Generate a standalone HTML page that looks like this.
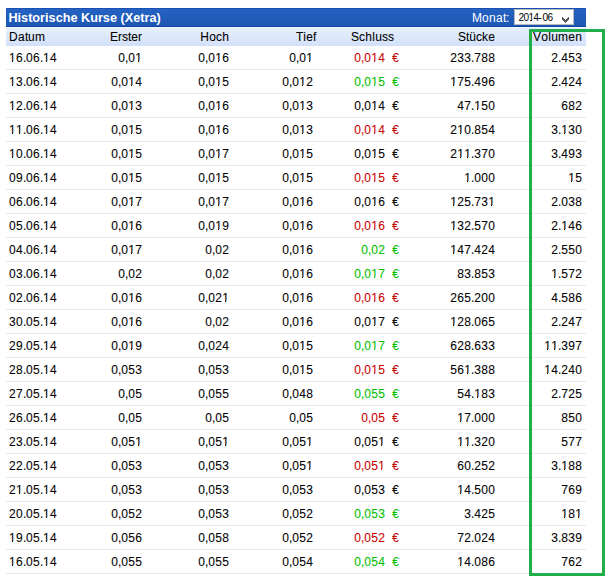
<!DOCTYPE html>
<html><head><meta charset="utf-8"><style>
html,body{margin:0;padding:0;background:#fff;width:607px;height:578px;overflow:hidden;position:relative}
body{font-family:"Liberation Sans",sans-serif;font-size:12px;color:#000}
.t{position:absolute;white-space:pre;line-height:14px;height:14px;-webkit-text-stroke:0.08px currentColor}
.r{text-align:right}
i{font-style:normal;display:inline-block}
.one{position:relative}.one::before,.one::after{content:'';position:absolute;top:10px;height:1px;background:#fff}.one::before{left:0;width:3px}.one::after{left:4px;width:3px}
.w3{width:3px}.w4{width:4px}.w6{width:6px}.w7{width:7px}.w8{width:8px}.w9{width:9px}.w10{width:10px}
.cr{color:#c80000}
.cg{color:#00c000}
#bar{position:absolute;left:6px;top:8px;width:580px;height:19px;background:linear-gradient(#2462c3,#1d57b3);border-top:1px solid #1a50b3;border-bottom:1px solid #1047a3;box-sizing:border-box}
#hl{position:absolute;left:6px;top:27px;width:580px;height:1px;background:#eef5fe}
#hdr{position:absolute;left:6px;top:28px;width:580px;height:18px;background:linear-gradient(#e7effc,#d2e0f9)}
.ln{position:absolute;left:6px;width:580px;height:1px;background:#e8e8e8}
#title{position:absolute;left:8.4px;top:11px;font-weight:bold;font-size:12.7px;color:#fff;line-height:15px;white-space:pre}
#monat{position:absolute;left:472px;top:11px;color:#fff;line-height:15px;white-space:pre}
#sel{position:absolute;left:514px;top:9px;width:60px;height:16px;box-sizing:border-box;border:1px solid #b9b9b9;background:#fff}
#seltxt{position:absolute;left:518.6px;top:12px;font-size:10px;line-height:11px;white-space:pre}
#seltxt i{width:5px}#seltxt i.h{width:3.8px}
.o1{position:relative}.o1::before,.o1::after{content:'';position:absolute;top:8px;height:1px;background:#fff}.o1::before{left:0;width:1px}.o1::after{left:3px;width:2px}
#green{position:absolute;left:529px;top:29px;width:76px;height:547px;box-sizing:border-box;border:3px solid #1fae4a}
</style></head><body>
<div id="bar"></div><div id="hl"></div><div id="hdr"></div>
<div id="title">Historische Kurse (Xetra)</div>
<div id="monat"><i class="w10">M</i><i class="w7">o</i><i class="w7">n</i><i class="w7">a</i><i class="w3">t</i><i class="w3">:</i></div>
<div id="sel"></div>
<div id="seltxt"><i>2</i><i>0</i><i class="o1">1</i><i>4</i><i class="h">-</i><i>0</i><i>6</i></div>
<svg style="position:absolute;left:0;top:0" width="607" height="40" shape-rendering="crispEdges"><g fill="#575757"><rect x="562" y="17" width="1" height="3"/><rect x="563" y="18" width="1" height="3"/><rect x="564" y="19" width="1" height="3"/><rect x="565" y="20" width="1" height="3"/><rect x="566" y="19" width="1" height="3"/><rect x="567" y="18" width="1" height="3"/><rect x="568" y="17" width="1" height="3"/></g></svg>

<div class="ln" style="top:69px"></div>
<div class="ln" style="top:93px"></div>
<div class="ln" style="top:117px"></div>
<div class="ln" style="top:141px"></div>
<div class="ln" style="top:165px"></div>
<div class="ln" style="top:189px"></div>
<div class="ln" style="top:213px"></div>
<div class="ln" style="top:237px"></div>
<div class="ln" style="top:261px"></div>
<div class="ln" style="top:285px"></div>
<div class="ln" style="top:309px"></div>
<div class="ln" style="top:333px"></div>
<div class="ln" style="top:357px"></div>
<div class="ln" style="top:381px"></div>
<div class="ln" style="top:405px"></div>
<div class="ln" style="top:429px"></div>
<div class="ln" style="top:453px"></div>
<div class="ln" style="top:477px"></div>
<div class="ln" style="top:501px"></div>
<div class="ln" style="top:525px"></div>
<div class="ln" style="top:549px"></div>
<div class="ln" style="top:573px"></div>
<div class="t " style="left:9px;top:30px"><i class="w9">D</i><i class="w7">a</i><i class="w3">t</i><i class="w7">u</i><i class="w10">m</i></div>
<div class="t r " style="right:465px;top:30px"><i class="w8">E</i><i class="w4">r</i><i class="w6">s</i><i class="w3">t</i><i class="w7">e</i><i class="w4">r</i></div>
<div class="t r " style="right:378px;top:30px"><i class="w9">H</i><i class="w7">o</i><i class="w6">c</i><i class="w7">h</i></div>
<div class="t r " style="right:291px;top:30px"><i class="w7">T</i><i class="w3">i</i><i class="w7">e</i><i class="w3">f</i></div>
<div class="t r " style="right:213px;top:30px"><i class="w8">S</i><i class="w6">c</i><i class="w7">h</i><i class="w3">l</i><i class="w7">u</i><i class="w6">s</i><i class="w6">s</i></div>
<div class="t r " style="right:112px;top:30px"><i class="w8">S</i><i class="w3">t</i><i class="w7">ü</i><i class="w6">c</i><i class="w6">k</i><i class="w7">e</i></div>
<div class="t r " style="right:25px;top:30px"><i class="w8">V</i><i class="w7">o</i><i class="w3">l</i><i class="w7">u</i><i class="w10">m</i><i class="w7">e</i><i class="w7">n</i></div>
<div class="t " style="left:9px;top:51px"><i class="w7 one">1</i><i class="w7">6</i><i class="w3">.</i><i class="w7">0</i><i class="w7">6</i><i class="w3">.</i><i class="w7 one">1</i><i class="w7">4</i></div>
<div class="t r " style="right:465px;top:51px"><i class="w7">0</i><i class="w3">,</i><i class="w7">0</i><i class="w7 one">1</i></div>
<div class="t r " style="right:378px;top:51px"><i class="w7">0</i><i class="w3">,</i><i class="w7">0</i><i class="w7 one">1</i><i class="w7">6</i></div>
<div class="t r " style="right:294px;top:51px"><i class="w7">0</i><i class="w3">,</i><i class="w7">0</i><i class="w7 one">1</i></div>
<div class="t r cr" style="right:208px;top:51px"><i class="w7">0</i><i class="w3">,</i><i class="w7">0</i><i class="w7 one">1</i><i class="w7">4</i><i class="w7"> </i><i class="w7">€</i></div>
<div class="t r " style="right:112px;top:51px"><i class="w7">2</i><i class="w7">3</i><i class="w7">3</i><i class="w3">.</i><i class="w7">7</i><i class="w7">8</i><i class="w7">8</i></div>
<div class="t r " style="right:25px;top:51px"><i class="w7">2</i><i class="w3">.</i><i class="w7">4</i><i class="w7">5</i><i class="w7">3</i></div>
<div class="t " style="left:9px;top:75px"><i class="w7 one">1</i><i class="w7">3</i><i class="w3">.</i><i class="w7">0</i><i class="w7">6</i><i class="w3">.</i><i class="w7 one">1</i><i class="w7">4</i></div>
<div class="t r " style="right:465px;top:75px"><i class="w7">0</i><i class="w3">,</i><i class="w7">0</i><i class="w7 one">1</i><i class="w7">4</i></div>
<div class="t r " style="right:378px;top:75px"><i class="w7">0</i><i class="w3">,</i><i class="w7">0</i><i class="w7 one">1</i><i class="w7">5</i></div>
<div class="t r " style="right:294px;top:75px"><i class="w7">0</i><i class="w3">,</i><i class="w7">0</i><i class="w7 one">1</i><i class="w7">2</i></div>
<div class="t r cg" style="right:208px;top:75px"><i class="w7">0</i><i class="w3">,</i><i class="w7">0</i><i class="w7 one">1</i><i class="w7">5</i><i class="w7"> </i><i class="w7">€</i></div>
<div class="t r " style="right:112px;top:75px"><i class="w7 one">1</i><i class="w7">7</i><i class="w7">5</i><i class="w3">.</i><i class="w7">4</i><i class="w7">9</i><i class="w7">6</i></div>
<div class="t r " style="right:25px;top:75px"><i class="w7">2</i><i class="w3">.</i><i class="w7">4</i><i class="w7">2</i><i class="w7">4</i></div>
<div class="t " style="left:9px;top:99px"><i class="w7 one">1</i><i class="w7">2</i><i class="w3">.</i><i class="w7">0</i><i class="w7">6</i><i class="w3">.</i><i class="w7 one">1</i><i class="w7">4</i></div>
<div class="t r " style="right:465px;top:99px"><i class="w7">0</i><i class="w3">,</i><i class="w7">0</i><i class="w7 one">1</i><i class="w7">3</i></div>
<div class="t r " style="right:378px;top:99px"><i class="w7">0</i><i class="w3">,</i><i class="w7">0</i><i class="w7 one">1</i><i class="w7">6</i></div>
<div class="t r " style="right:294px;top:99px"><i class="w7">0</i><i class="w3">,</i><i class="w7">0</i><i class="w7 one">1</i><i class="w7">3</i></div>
<div class="t r " style="right:208px;top:99px"><i class="w7">0</i><i class="w3">,</i><i class="w7">0</i><i class="w7 one">1</i><i class="w7">4</i><i class="w7"> </i><i class="w7">€</i></div>
<div class="t r " style="right:112px;top:99px"><i class="w7">4</i><i class="w7">7</i><i class="w3">.</i><i class="w7 one">1</i><i class="w7">5</i><i class="w7">0</i></div>
<div class="t r " style="right:25px;top:99px"><i class="w7">6</i><i class="w7">8</i><i class="w7">2</i></div>
<div class="t " style="left:9px;top:123px"><i class="w7 one">1</i><i class="w7 one">1</i><i class="w3">.</i><i class="w7">0</i><i class="w7">6</i><i class="w3">.</i><i class="w7 one">1</i><i class="w7">4</i></div>
<div class="t r " style="right:465px;top:123px"><i class="w7">0</i><i class="w3">,</i><i class="w7">0</i><i class="w7 one">1</i><i class="w7">5</i></div>
<div class="t r " style="right:378px;top:123px"><i class="w7">0</i><i class="w3">,</i><i class="w7">0</i><i class="w7 one">1</i><i class="w7">6</i></div>
<div class="t r " style="right:294px;top:123px"><i class="w7">0</i><i class="w3">,</i><i class="w7">0</i><i class="w7 one">1</i><i class="w7">3</i></div>
<div class="t r cr" style="right:208px;top:123px"><i class="w7">0</i><i class="w3">,</i><i class="w7">0</i><i class="w7 one">1</i><i class="w7">4</i><i class="w7"> </i><i class="w7">€</i></div>
<div class="t r " style="right:112px;top:123px"><i class="w7">2</i><i class="w7 one">1</i><i class="w7">0</i><i class="w3">.</i><i class="w7">8</i><i class="w7">5</i><i class="w7">4</i></div>
<div class="t r " style="right:25px;top:123px"><i class="w7">3</i><i class="w3">.</i><i class="w7 one">1</i><i class="w7">3</i><i class="w7">0</i></div>
<div class="t " style="left:9px;top:147px"><i class="w7 one">1</i><i class="w7">0</i><i class="w3">.</i><i class="w7">0</i><i class="w7">6</i><i class="w3">.</i><i class="w7 one">1</i><i class="w7">4</i></div>
<div class="t r " style="right:465px;top:147px"><i class="w7">0</i><i class="w3">,</i><i class="w7">0</i><i class="w7 one">1</i><i class="w7">5</i></div>
<div class="t r " style="right:378px;top:147px"><i class="w7">0</i><i class="w3">,</i><i class="w7">0</i><i class="w7 one">1</i><i class="w7">7</i></div>
<div class="t r " style="right:294px;top:147px"><i class="w7">0</i><i class="w3">,</i><i class="w7">0</i><i class="w7 one">1</i><i class="w7">5</i></div>
<div class="t r " style="right:208px;top:147px"><i class="w7">0</i><i class="w3">,</i><i class="w7">0</i><i class="w7 one">1</i><i class="w7">5</i><i class="w7"> </i><i class="w7">€</i></div>
<div class="t r " style="right:112px;top:147px"><i class="w7">2</i><i class="w7 one">1</i><i class="w7 one">1</i><i class="w3">.</i><i class="w7">3</i><i class="w7">7</i><i class="w7">0</i></div>
<div class="t r " style="right:25px;top:147px"><i class="w7">3</i><i class="w3">.</i><i class="w7">4</i><i class="w7">9</i><i class="w7">3</i></div>
<div class="t " style="left:9px;top:171px"><i class="w7">0</i><i class="w7">9</i><i class="w3">.</i><i class="w7">0</i><i class="w7">6</i><i class="w3">.</i><i class="w7 one">1</i><i class="w7">4</i></div>
<div class="t r " style="right:465px;top:171px"><i class="w7">0</i><i class="w3">,</i><i class="w7">0</i><i class="w7 one">1</i><i class="w7">5</i></div>
<div class="t r " style="right:378px;top:171px"><i class="w7">0</i><i class="w3">,</i><i class="w7">0</i><i class="w7 one">1</i><i class="w7">5</i></div>
<div class="t r " style="right:294px;top:171px"><i class="w7">0</i><i class="w3">,</i><i class="w7">0</i><i class="w7 one">1</i><i class="w7">5</i></div>
<div class="t r cr" style="right:208px;top:171px"><i class="w7">0</i><i class="w3">,</i><i class="w7">0</i><i class="w7 one">1</i><i class="w7">5</i><i class="w7"> </i><i class="w7">€</i></div>
<div class="t r " style="right:112px;top:171px"><i class="w7 one">1</i><i class="w3">.</i><i class="w7">0</i><i class="w7">0</i><i class="w7">0</i></div>
<div class="t r " style="right:25px;top:171px"><i class="w7 one">1</i><i class="w7">5</i></div>
<div class="t " style="left:9px;top:195px"><i class="w7">0</i><i class="w7">6</i><i class="w3">.</i><i class="w7">0</i><i class="w7">6</i><i class="w3">.</i><i class="w7 one">1</i><i class="w7">4</i></div>
<div class="t r " style="right:465px;top:195px"><i class="w7">0</i><i class="w3">,</i><i class="w7">0</i><i class="w7 one">1</i><i class="w7">7</i></div>
<div class="t r " style="right:378px;top:195px"><i class="w7">0</i><i class="w3">,</i><i class="w7">0</i><i class="w7 one">1</i><i class="w7">7</i></div>
<div class="t r " style="right:294px;top:195px"><i class="w7">0</i><i class="w3">,</i><i class="w7">0</i><i class="w7 one">1</i><i class="w7">6</i></div>
<div class="t r " style="right:208px;top:195px"><i class="w7">0</i><i class="w3">,</i><i class="w7">0</i><i class="w7 one">1</i><i class="w7">6</i><i class="w7"> </i><i class="w7">€</i></div>
<div class="t r " style="right:112px;top:195px"><i class="w7 one">1</i><i class="w7">2</i><i class="w7">5</i><i class="w3">.</i><i class="w7">7</i><i class="w7">3</i><i class="w7 one">1</i></div>
<div class="t r " style="right:25px;top:195px"><i class="w7">2</i><i class="w3">.</i><i class="w7">0</i><i class="w7">3</i><i class="w7">8</i></div>
<div class="t " style="left:9px;top:219px"><i class="w7">0</i><i class="w7">5</i><i class="w3">.</i><i class="w7">0</i><i class="w7">6</i><i class="w3">.</i><i class="w7 one">1</i><i class="w7">4</i></div>
<div class="t r " style="right:465px;top:219px"><i class="w7">0</i><i class="w3">,</i><i class="w7">0</i><i class="w7 one">1</i><i class="w7">6</i></div>
<div class="t r " style="right:378px;top:219px"><i class="w7">0</i><i class="w3">,</i><i class="w7">0</i><i class="w7 one">1</i><i class="w7">9</i></div>
<div class="t r " style="right:294px;top:219px"><i class="w7">0</i><i class="w3">,</i><i class="w7">0</i><i class="w7 one">1</i><i class="w7">6</i></div>
<div class="t r cr" style="right:208px;top:219px"><i class="w7">0</i><i class="w3">,</i><i class="w7">0</i><i class="w7 one">1</i><i class="w7">6</i><i class="w7"> </i><i class="w7">€</i></div>
<div class="t r " style="right:112px;top:219px"><i class="w7 one">1</i><i class="w7">3</i><i class="w7">2</i><i class="w3">.</i><i class="w7">5</i><i class="w7">7</i><i class="w7">0</i></div>
<div class="t r " style="right:25px;top:219px"><i class="w7">2</i><i class="w3">.</i><i class="w7 one">1</i><i class="w7">4</i><i class="w7">6</i></div>
<div class="t " style="left:9px;top:243px"><i class="w7">0</i><i class="w7">4</i><i class="w3">.</i><i class="w7">0</i><i class="w7">6</i><i class="w3">.</i><i class="w7 one">1</i><i class="w7">4</i></div>
<div class="t r " style="right:465px;top:243px"><i class="w7">0</i><i class="w3">,</i><i class="w7">0</i><i class="w7 one">1</i><i class="w7">7</i></div>
<div class="t r " style="right:378px;top:243px"><i class="w7">0</i><i class="w3">,</i><i class="w7">0</i><i class="w7">2</i></div>
<div class="t r " style="right:294px;top:243px"><i class="w7">0</i><i class="w3">,</i><i class="w7">0</i><i class="w7 one">1</i><i class="w7">6</i></div>
<div class="t r cg" style="right:208px;top:243px"><i class="w7">0</i><i class="w3">,</i><i class="w7">0</i><i class="w7">2</i><i class="w7"> </i><i class="w7">€</i></div>
<div class="t r " style="right:112px;top:243px"><i class="w7 one">1</i><i class="w7">4</i><i class="w7">7</i><i class="w3">.</i><i class="w7">4</i><i class="w7">2</i><i class="w7">4</i></div>
<div class="t r " style="right:25px;top:243px"><i class="w7">2</i><i class="w3">.</i><i class="w7">5</i><i class="w7">5</i><i class="w7">0</i></div>
<div class="t " style="left:9px;top:267px"><i class="w7">0</i><i class="w7">3</i><i class="w3">.</i><i class="w7">0</i><i class="w7">6</i><i class="w3">.</i><i class="w7 one">1</i><i class="w7">4</i></div>
<div class="t r " style="right:465px;top:267px"><i class="w7">0</i><i class="w3">,</i><i class="w7">0</i><i class="w7">2</i></div>
<div class="t r " style="right:378px;top:267px"><i class="w7">0</i><i class="w3">,</i><i class="w7">0</i><i class="w7">2</i></div>
<div class="t r " style="right:294px;top:267px"><i class="w7">0</i><i class="w3">,</i><i class="w7">0</i><i class="w7 one">1</i><i class="w7">6</i></div>
<div class="t r cg" style="right:208px;top:267px"><i class="w7">0</i><i class="w3">,</i><i class="w7">0</i><i class="w7 one">1</i><i class="w7">7</i><i class="w7"> </i><i class="w7">€</i></div>
<div class="t r " style="right:112px;top:267px"><i class="w7">8</i><i class="w7">3</i><i class="w3">.</i><i class="w7">8</i><i class="w7">5</i><i class="w7">3</i></div>
<div class="t r " style="right:25px;top:267px"><i class="w7 one">1</i><i class="w3">.</i><i class="w7">5</i><i class="w7">7</i><i class="w7">2</i></div>
<div class="t " style="left:9px;top:291px"><i class="w7">0</i><i class="w7">2</i><i class="w3">.</i><i class="w7">0</i><i class="w7">6</i><i class="w3">.</i><i class="w7 one">1</i><i class="w7">4</i></div>
<div class="t r " style="right:465px;top:291px"><i class="w7">0</i><i class="w3">,</i><i class="w7">0</i><i class="w7 one">1</i><i class="w7">6</i></div>
<div class="t r " style="right:378px;top:291px"><i class="w7">0</i><i class="w3">,</i><i class="w7">0</i><i class="w7">2</i><i class="w7 one">1</i></div>
<div class="t r " style="right:294px;top:291px"><i class="w7">0</i><i class="w3">,</i><i class="w7">0</i><i class="w7 one">1</i><i class="w7">6</i></div>
<div class="t r cr" style="right:208px;top:291px"><i class="w7">0</i><i class="w3">,</i><i class="w7">0</i><i class="w7 one">1</i><i class="w7">6</i><i class="w7"> </i><i class="w7">€</i></div>
<div class="t r " style="right:112px;top:291px"><i class="w7">2</i><i class="w7">6</i><i class="w7">5</i><i class="w3">.</i><i class="w7">2</i><i class="w7">0</i><i class="w7">0</i></div>
<div class="t r " style="right:25px;top:291px"><i class="w7">4</i><i class="w3">.</i><i class="w7">5</i><i class="w7">8</i><i class="w7">6</i></div>
<div class="t " style="left:9px;top:315px"><i class="w7">3</i><i class="w7">0</i><i class="w3">.</i><i class="w7">0</i><i class="w7">5</i><i class="w3">.</i><i class="w7 one">1</i><i class="w7">4</i></div>
<div class="t r " style="right:465px;top:315px"><i class="w7">0</i><i class="w3">,</i><i class="w7">0</i><i class="w7 one">1</i><i class="w7">6</i></div>
<div class="t r " style="right:378px;top:315px"><i class="w7">0</i><i class="w3">,</i><i class="w7">0</i><i class="w7">2</i></div>
<div class="t r " style="right:294px;top:315px"><i class="w7">0</i><i class="w3">,</i><i class="w7">0</i><i class="w7 one">1</i><i class="w7">6</i></div>
<div class="t r " style="right:208px;top:315px"><i class="w7">0</i><i class="w3">,</i><i class="w7">0</i><i class="w7 one">1</i><i class="w7">7</i><i class="w7"> </i><i class="w7">€</i></div>
<div class="t r " style="right:112px;top:315px"><i class="w7 one">1</i><i class="w7">2</i><i class="w7">8</i><i class="w3">.</i><i class="w7">0</i><i class="w7">6</i><i class="w7">5</i></div>
<div class="t r " style="right:25px;top:315px"><i class="w7">2</i><i class="w3">.</i><i class="w7">2</i><i class="w7">4</i><i class="w7">7</i></div>
<div class="t " style="left:9px;top:339px"><i class="w7">2</i><i class="w7">9</i><i class="w3">.</i><i class="w7">0</i><i class="w7">5</i><i class="w3">.</i><i class="w7 one">1</i><i class="w7">4</i></div>
<div class="t r " style="right:465px;top:339px"><i class="w7">0</i><i class="w3">,</i><i class="w7">0</i><i class="w7 one">1</i><i class="w7">9</i></div>
<div class="t r " style="right:378px;top:339px"><i class="w7">0</i><i class="w3">,</i><i class="w7">0</i><i class="w7">2</i><i class="w7">4</i></div>
<div class="t r " style="right:294px;top:339px"><i class="w7">0</i><i class="w3">,</i><i class="w7">0</i><i class="w7 one">1</i><i class="w7">5</i></div>
<div class="t r cg" style="right:208px;top:339px"><i class="w7">0</i><i class="w3">,</i><i class="w7">0</i><i class="w7 one">1</i><i class="w7">7</i><i class="w7"> </i><i class="w7">€</i></div>
<div class="t r " style="right:112px;top:339px"><i class="w7">6</i><i class="w7">2</i><i class="w7">8</i><i class="w3">.</i><i class="w7">6</i><i class="w7">3</i><i class="w7">3</i></div>
<div class="t r " style="right:25px;top:339px"><i class="w7 one">1</i><i class="w7 one">1</i><i class="w3">.</i><i class="w7">3</i><i class="w7">9</i><i class="w7">7</i></div>
<div class="t " style="left:9px;top:363px"><i class="w7">2</i><i class="w7">8</i><i class="w3">.</i><i class="w7">0</i><i class="w7">5</i><i class="w3">.</i><i class="w7 one">1</i><i class="w7">4</i></div>
<div class="t r " style="right:465px;top:363px"><i class="w7">0</i><i class="w3">,</i><i class="w7">0</i><i class="w7">5</i><i class="w7">3</i></div>
<div class="t r " style="right:378px;top:363px"><i class="w7">0</i><i class="w3">,</i><i class="w7">0</i><i class="w7">5</i><i class="w7">3</i></div>
<div class="t r " style="right:294px;top:363px"><i class="w7">0</i><i class="w3">,</i><i class="w7">0</i><i class="w7 one">1</i><i class="w7">5</i></div>
<div class="t r cr" style="right:208px;top:363px"><i class="w7">0</i><i class="w3">,</i><i class="w7">0</i><i class="w7 one">1</i><i class="w7">5</i><i class="w7"> </i><i class="w7">€</i></div>
<div class="t r " style="right:112px;top:363px"><i class="w7">5</i><i class="w7">6</i><i class="w7 one">1</i><i class="w3">.</i><i class="w7">3</i><i class="w7">8</i><i class="w7">8</i></div>
<div class="t r " style="right:25px;top:363px"><i class="w7 one">1</i><i class="w7">4</i><i class="w3">.</i><i class="w7">2</i><i class="w7">4</i><i class="w7">0</i></div>
<div class="t " style="left:9px;top:387px"><i class="w7">2</i><i class="w7">7</i><i class="w3">.</i><i class="w7">0</i><i class="w7">5</i><i class="w3">.</i><i class="w7 one">1</i><i class="w7">4</i></div>
<div class="t r " style="right:465px;top:387px"><i class="w7">0</i><i class="w3">,</i><i class="w7">0</i><i class="w7">5</i></div>
<div class="t r " style="right:378px;top:387px"><i class="w7">0</i><i class="w3">,</i><i class="w7">0</i><i class="w7">5</i><i class="w7">5</i></div>
<div class="t r " style="right:294px;top:387px"><i class="w7">0</i><i class="w3">,</i><i class="w7">0</i><i class="w7">4</i><i class="w7">8</i></div>
<div class="t r cg" style="right:208px;top:387px"><i class="w7">0</i><i class="w3">,</i><i class="w7">0</i><i class="w7">5</i><i class="w7">5</i><i class="w7"> </i><i class="w7">€</i></div>
<div class="t r " style="right:112px;top:387px"><i class="w7">5</i><i class="w7">4</i><i class="w3">.</i><i class="w7 one">1</i><i class="w7">8</i><i class="w7">3</i></div>
<div class="t r " style="right:25px;top:387px"><i class="w7">2</i><i class="w3">.</i><i class="w7">7</i><i class="w7">2</i><i class="w7">5</i></div>
<div class="t " style="left:9px;top:411px"><i class="w7">2</i><i class="w7">6</i><i class="w3">.</i><i class="w7">0</i><i class="w7">5</i><i class="w3">.</i><i class="w7 one">1</i><i class="w7">4</i></div>
<div class="t r " style="right:465px;top:411px"><i class="w7">0</i><i class="w3">,</i><i class="w7">0</i><i class="w7">5</i></div>
<div class="t r " style="right:378px;top:411px"><i class="w7">0</i><i class="w3">,</i><i class="w7">0</i><i class="w7">5</i></div>
<div class="t r " style="right:294px;top:411px"><i class="w7">0</i><i class="w3">,</i><i class="w7">0</i><i class="w7">5</i></div>
<div class="t r cr" style="right:208px;top:411px"><i class="w7">0</i><i class="w3">,</i><i class="w7">0</i><i class="w7">5</i><i class="w7"> </i><i class="w7">€</i></div>
<div class="t r " style="right:112px;top:411px"><i class="w7 one">1</i><i class="w7">7</i><i class="w3">.</i><i class="w7">0</i><i class="w7">0</i><i class="w7">0</i></div>
<div class="t r " style="right:25px;top:411px"><i class="w7">8</i><i class="w7">5</i><i class="w7">0</i></div>
<div class="t " style="left:9px;top:435px"><i class="w7">2</i><i class="w7">3</i><i class="w3">.</i><i class="w7">0</i><i class="w7">5</i><i class="w3">.</i><i class="w7 one">1</i><i class="w7">4</i></div>
<div class="t r " style="right:465px;top:435px"><i class="w7">0</i><i class="w3">,</i><i class="w7">0</i><i class="w7">5</i><i class="w7 one">1</i></div>
<div class="t r " style="right:378px;top:435px"><i class="w7">0</i><i class="w3">,</i><i class="w7">0</i><i class="w7">5</i><i class="w7 one">1</i></div>
<div class="t r " style="right:294px;top:435px"><i class="w7">0</i><i class="w3">,</i><i class="w7">0</i><i class="w7">5</i><i class="w7 one">1</i></div>
<div class="t r " style="right:208px;top:435px"><i class="w7">0</i><i class="w3">,</i><i class="w7">0</i><i class="w7">5</i><i class="w7 one">1</i><i class="w7"> </i><i class="w7">€</i></div>
<div class="t r " style="right:112px;top:435px"><i class="w7 one">1</i><i class="w7 one">1</i><i class="w3">.</i><i class="w7">3</i><i class="w7">2</i><i class="w7">0</i></div>
<div class="t r " style="right:25px;top:435px"><i class="w7">5</i><i class="w7">7</i><i class="w7">7</i></div>
<div class="t " style="left:9px;top:459px"><i class="w7">2</i><i class="w7">2</i><i class="w3">.</i><i class="w7">0</i><i class="w7">5</i><i class="w3">.</i><i class="w7 one">1</i><i class="w7">4</i></div>
<div class="t r " style="right:465px;top:459px"><i class="w7">0</i><i class="w3">,</i><i class="w7">0</i><i class="w7">5</i><i class="w7">3</i></div>
<div class="t r " style="right:378px;top:459px"><i class="w7">0</i><i class="w3">,</i><i class="w7">0</i><i class="w7">5</i><i class="w7">3</i></div>
<div class="t r " style="right:294px;top:459px"><i class="w7">0</i><i class="w3">,</i><i class="w7">0</i><i class="w7">5</i><i class="w7 one">1</i></div>
<div class="t r cr" style="right:208px;top:459px"><i class="w7">0</i><i class="w3">,</i><i class="w7">0</i><i class="w7">5</i><i class="w7 one">1</i><i class="w7"> </i><i class="w7">€</i></div>
<div class="t r " style="right:112px;top:459px"><i class="w7">6</i><i class="w7">0</i><i class="w3">.</i><i class="w7">2</i><i class="w7">5</i><i class="w7">2</i></div>
<div class="t r " style="right:25px;top:459px"><i class="w7">3</i><i class="w3">.</i><i class="w7 one">1</i><i class="w7">8</i><i class="w7">8</i></div>
<div class="t " style="left:9px;top:483px"><i class="w7">2</i><i class="w7 one">1</i><i class="w3">.</i><i class="w7">0</i><i class="w7">5</i><i class="w3">.</i><i class="w7 one">1</i><i class="w7">4</i></div>
<div class="t r " style="right:465px;top:483px"><i class="w7">0</i><i class="w3">,</i><i class="w7">0</i><i class="w7">5</i><i class="w7">3</i></div>
<div class="t r " style="right:378px;top:483px"><i class="w7">0</i><i class="w3">,</i><i class="w7">0</i><i class="w7">5</i><i class="w7">3</i></div>
<div class="t r " style="right:294px;top:483px"><i class="w7">0</i><i class="w3">,</i><i class="w7">0</i><i class="w7">5</i><i class="w7">3</i></div>
<div class="t r " style="right:208px;top:483px"><i class="w7">0</i><i class="w3">,</i><i class="w7">0</i><i class="w7">5</i><i class="w7">3</i><i class="w7"> </i><i class="w7">€</i></div>
<div class="t r " style="right:112px;top:483px"><i class="w7 one">1</i><i class="w7">4</i><i class="w3">.</i><i class="w7">5</i><i class="w7">0</i><i class="w7">0</i></div>
<div class="t r " style="right:25px;top:483px"><i class="w7">7</i><i class="w7">6</i><i class="w7">9</i></div>
<div class="t " style="left:9px;top:507px"><i class="w7">2</i><i class="w7">0</i><i class="w3">.</i><i class="w7">0</i><i class="w7">5</i><i class="w3">.</i><i class="w7 one">1</i><i class="w7">4</i></div>
<div class="t r " style="right:465px;top:507px"><i class="w7">0</i><i class="w3">,</i><i class="w7">0</i><i class="w7">5</i><i class="w7">2</i></div>
<div class="t r " style="right:378px;top:507px"><i class="w7">0</i><i class="w3">,</i><i class="w7">0</i><i class="w7">5</i><i class="w7">3</i></div>
<div class="t r " style="right:294px;top:507px"><i class="w7">0</i><i class="w3">,</i><i class="w7">0</i><i class="w7">5</i><i class="w7">2</i></div>
<div class="t r cg" style="right:208px;top:507px"><i class="w7">0</i><i class="w3">,</i><i class="w7">0</i><i class="w7">5</i><i class="w7">3</i><i class="w7"> </i><i class="w7">€</i></div>
<div class="t r " style="right:112px;top:507px"><i class="w7">3</i><i class="w3">.</i><i class="w7">4</i><i class="w7">2</i><i class="w7">5</i></div>
<div class="t r " style="right:25px;top:507px"><i class="w7 one">1</i><i class="w7">8</i><i class="w7 one">1</i></div>
<div class="t " style="left:9px;top:531px"><i class="w7 one">1</i><i class="w7">9</i><i class="w3">.</i><i class="w7">0</i><i class="w7">5</i><i class="w3">.</i><i class="w7 one">1</i><i class="w7">4</i></div>
<div class="t r " style="right:465px;top:531px"><i class="w7">0</i><i class="w3">,</i><i class="w7">0</i><i class="w7">5</i><i class="w7">6</i></div>
<div class="t r " style="right:378px;top:531px"><i class="w7">0</i><i class="w3">,</i><i class="w7">0</i><i class="w7">5</i><i class="w7">8</i></div>
<div class="t r " style="right:294px;top:531px"><i class="w7">0</i><i class="w3">,</i><i class="w7">0</i><i class="w7">5</i><i class="w7">2</i></div>
<div class="t r cr" style="right:208px;top:531px"><i class="w7">0</i><i class="w3">,</i><i class="w7">0</i><i class="w7">5</i><i class="w7">2</i><i class="w7"> </i><i class="w7">€</i></div>
<div class="t r " style="right:112px;top:531px"><i class="w7">7</i><i class="w7">2</i><i class="w3">.</i><i class="w7">0</i><i class="w7">2</i><i class="w7">4</i></div>
<div class="t r " style="right:25px;top:531px"><i class="w7">3</i><i class="w3">.</i><i class="w7">8</i><i class="w7">3</i><i class="w7">9</i></div>
<div class="t " style="left:9px;top:555px"><i class="w7 one">1</i><i class="w7">6</i><i class="w3">.</i><i class="w7">0</i><i class="w7">5</i><i class="w3">.</i><i class="w7 one">1</i><i class="w7">4</i></div>
<div class="t r " style="right:465px;top:555px"><i class="w7">0</i><i class="w3">,</i><i class="w7">0</i><i class="w7">5</i><i class="w7">5</i></div>
<div class="t r " style="right:378px;top:555px"><i class="w7">0</i><i class="w3">,</i><i class="w7">0</i><i class="w7">5</i><i class="w7">5</i></div>
<div class="t r " style="right:294px;top:555px"><i class="w7">0</i><i class="w3">,</i><i class="w7">0</i><i class="w7">5</i><i class="w7">4</i></div>
<div class="t r cg" style="right:208px;top:555px"><i class="w7">0</i><i class="w3">,</i><i class="w7">0</i><i class="w7">5</i><i class="w7">4</i><i class="w7"> </i><i class="w7">€</i></div>
<div class="t r " style="right:112px;top:555px"><i class="w7 one">1</i><i class="w7">4</i><i class="w3">.</i><i class="w7">0</i><i class="w7">8</i><i class="w7">6</i></div>
<div class="t r " style="right:25px;top:555px"><i class="w7">7</i><i class="w7">6</i><i class="w7">2</i></div>
<div id="green"></div>
</body></html>
